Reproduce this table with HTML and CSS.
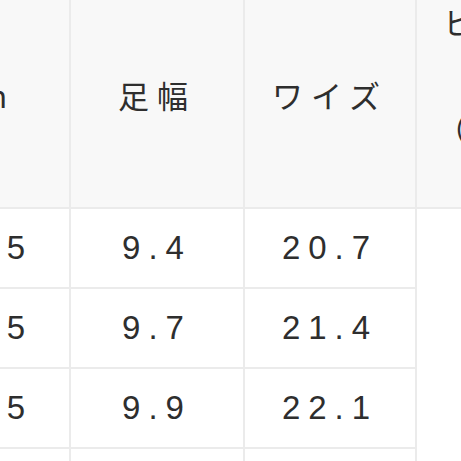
FILE: index.html
```html
<!DOCTYPE html>
<html lang="ja">
<head>
<meta charset="utf-8">
<link rel="stylesheet" href="styles.css">
</head>
<body>
<div class="viewport">
  <table class="size-table">
    <thead>
      <tr>
        <th class="c1">cm</th>
        <th class="c2">足幅</th>
        <th class="c3">ワイズ</th>
        <th class="c4 multi">ヒール<br>高さ<br><span class="unit">（cm）</span><br>目安</th>
      </tr>
    </thead>
    <tbody>
      <tr><td class="c1">22.5</td><td class="c2">9.4</td><td class="c3">20.7</td><td class="c4"></td></tr>
      <tr><td class="c1">23.5</td><td class="c2">9.7</td><td class="c3">21.4</td><td class="c4"></td></tr>
      <tr><td class="c1">24.5</td><td class="c2">9.9</td><td class="c3">22.1</td><td class="c4"></td></tr>
      <tr><td class="c1">25.5</td><td class="c2">10.1</td><td class="c3">22.8</td><td class="c4"></td></tr>
    </tbody>
  </table>
</div>
</body>
</html>
```
FILE: styles.css
```css
html, body {
  margin: 0;
  padding: 0;
  background: #ffffff;
}

.viewport {
  width: 461px;
  height: 461px;
  overflow: hidden;
  background: #ffffff;
}

.size-table {
  margin-top: -5px;
  margin-left: -99px;
  width: 686px;
  table-layout: fixed;
  border-collapse: separate;
  border-spacing: 0;
  color: #2e2e2e;
}

.size-table th,
.size-table td {
  box-sizing: border-box;
  padding: 0;
  text-align: center;
  vertical-align: middle;
  border-right: 2px solid #ebebeb;
  border-bottom: 2px solid #ebebeb;
}

.c1 { width: 170px; }
.c2 { width: 174px; }
.c3 { width: 172px; }
.c4 { width: 170px; }

.size-table th {
  background: #f8f8f8;
  font-family: "Noto Sans CJK JP", "Liberation Sans", sans-serif;
  font-weight: 400;
  font-size: 31px;
  letter-spacing: 8px;
  padding-bottom: 14px;
}

.size-table th.multi {
  line-height: 53px;
  padding-bottom: 0;
}

.unit {
  margin-left: 9px;
}

.size-table td {
  height: 80px;
  font-family: "Liberation Sans", "Noto Sans", sans-serif;
  font-size: 33px;
  letter-spacing: 8px;
  background: #ffffff;
}

.size-table td.c4 {
  border-right: none;
  border-bottom: none;
}
```
